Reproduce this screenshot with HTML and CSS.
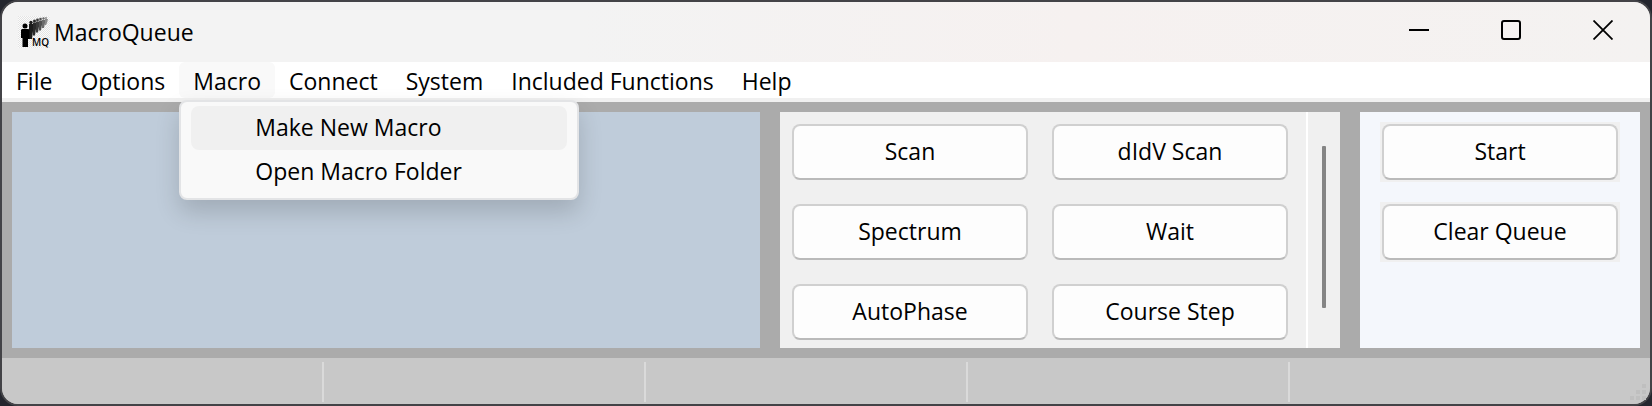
FILE: index.html
```html
<!DOCTYPE html>
<html lang="en">
<head>
<meta charset="utf-8">
<title>MacroQueue</title>
<link rel="stylesheet" href="styles.css">
</head>
<body>
<div class="window">
  <header class="titlebar">
    <svg class="app-icon" viewBox="0 0 32 32" aria-hidden="true">
      <defs>
        <pattern id="checks" width="2" height="2" patternUnits="userSpaceOnUse">
          <rect width="2" height="2" fill="#fbfbfb"/>
          <rect width="1" height="1" fill="#e4e4e4"/>
          <rect x="1" y="1" width="1" height="1" fill="#e4e4e4"/>
        </pattern>
      </defs>
      <rect width="32" height="32" fill="url(#checks)"/>
      <g fill="#8c8c8c"><circle cx="28" cy="2" r="1"/><path d="M27 3h3l-1 4-1 2h-1z"/></g>
      <g fill="#6c6c6c"><circle cx="25.500" cy="2.500" r="1.200"/><path d="M24 4h3v3l-1 5h-2z"/></g>
      <g fill="#505050"><circle cx="22.500" cy="3" r="1.300"/><path d="M21 4.500h3v4l-1 6h-2z"/></g>
      <g fill="#3a3a3a"><circle cx="19.500" cy="4" r="1.400"/><path d="M18 5.500h3v5l-1 6h-2z"/></g>
      <g fill="#2a2a2a"><circle cx="16.500" cy="5" r="1.500"/><path d="M15 6.500h3v6l-1 7h-2z"/></g>
      <g fill="#1b1b1b"><circle cx="13" cy="6.500" r="1.700"/><path d="M11 8h4v7l-1 8h-3z"/></g>
      <g fill="#000"><circle cx="7" cy="10" r="2.500"/><path d="M4 13h6.500l1 1v9H10v8H4.500v-9H3v-8z"/></g>
      <text class="icon-text" x="14" y="30">MQ</text>
    </svg>
    <h1 class="title">MacroQueue</h1>
    <div class="window-controls">
      <button class="window-button" type="button" aria-label="Minimize">
        <svg viewBox="0 0 20 20"><path d="M0 10h20" stroke-width="2"/></svg>
      </button>
      <button class="window-button" type="button" aria-label="Maximize">
        <svg viewBox="0 0 20 20"><rect x="1" y="1" width="18" height="18" rx="2" stroke-width="2"/></svg>
      </button>
      <button class="window-button" type="button" aria-label="Close">
        <svg viewBox="0 0 20 20"><path d="M.5.5l19 19M19.500.5l-19 19" stroke-width="1.800"/></svg>
      </button>
    </div>
  </header>

  <nav class="menubar" aria-label="Main menu">
    <button class="menu-title" type="button">File</button>
    <button class="menu-title" type="button">Options</button>
    <div class="menu">
      <button class="menu-title open" type="button" aria-expanded="true">Macro</button>
      <div class="dropdown" role="menu">
        <button class="menu-item active" type="button" role="menuitem">Make New Macro</button>
        <button class="menu-item" type="button" role="menuitem">Open Macro Folder</button>
      </div>
    </div>
    <button class="menu-title" type="button">Connect</button>
    <button class="menu-title" type="button">System</button>
    <button class="menu-title" type="button">Included Functions</button>
    <button class="menu-title" type="button">Help</button>
  </nav>

  <main class="workspace">
    <section class="queue" aria-label="Queue"></section>
    <section class="functions" aria-label="Functions">
      <div class="function-grid">
        <button class="button" type="button">Scan</button>
        <button class="button" type="button">dIdV Scan</button>
        <button class="button" type="button">Spectrum</button>
        <button class="button" type="button">Wait</button>
        <button class="button" type="button">AutoPhase</button>
        <button class="button" type="button">Course Step</button>
      </div>
      <div class="scrollbar"><div class="thumb"></div></div>
    </section>
    <section class="controls" aria-label="Queue controls">
      <div class="button-frame"><button class="button" type="button">Start</button></div>
      <div class="button-frame"><button class="button" type="button">Clear Queue</button></div>
    </section>
  </main>

  <footer class="statusbar">
    <div class="status-cell"></div>
    <div class="status-cell"></div>
    <div class="status-cell"></div>
    <div class="status-cell"></div>
    <div class="status-end">
      <svg class="grip" viewBox="0 0 16 16" aria-hidden="true"><path d="M12 0h4v4h-4zM6 6h4v4H6zM12 6h4v4h-4zM0 12h4v4H0zM6 12h4v4H6zM12 12h4v4h-4z"/></svg>
    </div>
  </footer>
</div>
</body>
</html>
```
FILE: styles.css
```css
* {
  box-sizing: border-box;
}

body {
  margin: 0;
  background: #24262e;
  color: #000;
  font: 23px/32px "Open Sans", "Noto Sans", sans-serif;
}

button {
  margin: 0;
  padding: 0;
  border: 0;
  background: none;
  color: inherit;
  font: inherit;
}

.window {
  display: flex;
  flex-direction: column;
  min-height: 100vh;
  border: 2px solid #434347;
  border-radius: 18px;
  background: #ababab;
}

.titlebar {
  display: flex;
  align-items: center;
  height: 60px;
  padding: 0 1px 0 16px;
  border-radius: 16px 16px 0 0;
  background: linear-gradient(90deg, #f3f3f3 35%, #f6f1f0 65%, #f4f2f1);
}

.app-icon {
  width: 32px;
  height: 32px;
  overflow: visible;
}

.icon-text {
  font: 600 10px "Open Sans", sans-serif;
}

.title {
  margin: 0 auto 0 4px;
  font-size: 23px;
  font-weight: 400;
}

.window-controls {
  display: flex;
  align-self: stretch;
}

.window-button {
  display: flex;
  align-items: center;
  justify-content: center;
  width: 92px;
  height: 56px;
}

.window-button svg {
  width: 20px;
  height: 20px;
  fill: none;
  stroke: #000;
}

.menubar {
  display: flex;
  height: 40px;
  border-bottom: 4px solid #f0f0f0;
  background: #fff;
}

.menu {
  position: relative;
}

.menu-title {
  height: 36px;
  padding: 2px 14px 0;
  white-space: nowrap;
}

.menu-title.open {
  border-radius: 6px;
  background: #f9f9f9;
}

.dropdown {
  position: absolute;
  z-index: 1;
  top: 38px;
  left: 0;
  width: 400px;
  padding: 4px 10px;
  border: 2px solid #e3e4e6;
  border-radius: 8px;
  background: #f9f9f9;
  box-shadow: 0 12px 24px rgb(0 0 0 / 16%);
}

.menu-item {
  display: block;
  width: 100%;
  height: 44px;
  padding: 0 64px 2px;
  border-radius: 8px;
  text-align: left;
}

.menu-item.active {
  background: #f0f0f0;
}

.workspace {
  display: flex;
  flex: 1;
  gap: 20px;
  padding: 10px;
}

.queue {
  flex: 1;
  background: #bfccda;
}

.functions {
  display: flex;
  background: #f0f0f0;
}

.function-grid {
  display: grid;
  grid-template-columns: 236px 236px;
  gap: 24px;
  align-content: start;
  padding: 12px 18px 8px 12px;
}

.button {
  width: 236px;
  height: 56px;
  padding-bottom: 2px;
  border: 2px solid #d0d0d0;
  border-bottom-color: #bababa;
  border-radius: 8px;
  background: #fdfdfd;
}

.scrollbar {
  width: 34px;
  padding: 34px 14px 40px;
  border-left: 2px solid #fff;
}

.thumb {
  width: 4px;
  height: 100%;
  border-radius: 1px;
  background: #858585;
}

.controls {
  display: flex;
  flex-direction: column;
  gap: 20px;
  padding: 10px 20px;
  background: #f4f7fc;
}

.button-frame {
  display: flex;
  padding: 2px;
  background: #f0f0f0;
}

.statusbar {
  display: flex;
  height: 46px;
  padding: 4px 4px 2px 0;
  border-radius: 0 0 16px 16px;
  background: #c8c8c8;
}

.status-cell {
  flex: 322 0 0;
  border-right: 2px solid #dadada;
}

.status-end {
  display: flex;
  flex: 358 0 0;
  align-items: flex-end;
  justify-content: flex-end;
  padding-bottom: 2px;
}

.grip {
  width: 16px;
  height: 16px;
  fill: #bfbfbf;
}
```
